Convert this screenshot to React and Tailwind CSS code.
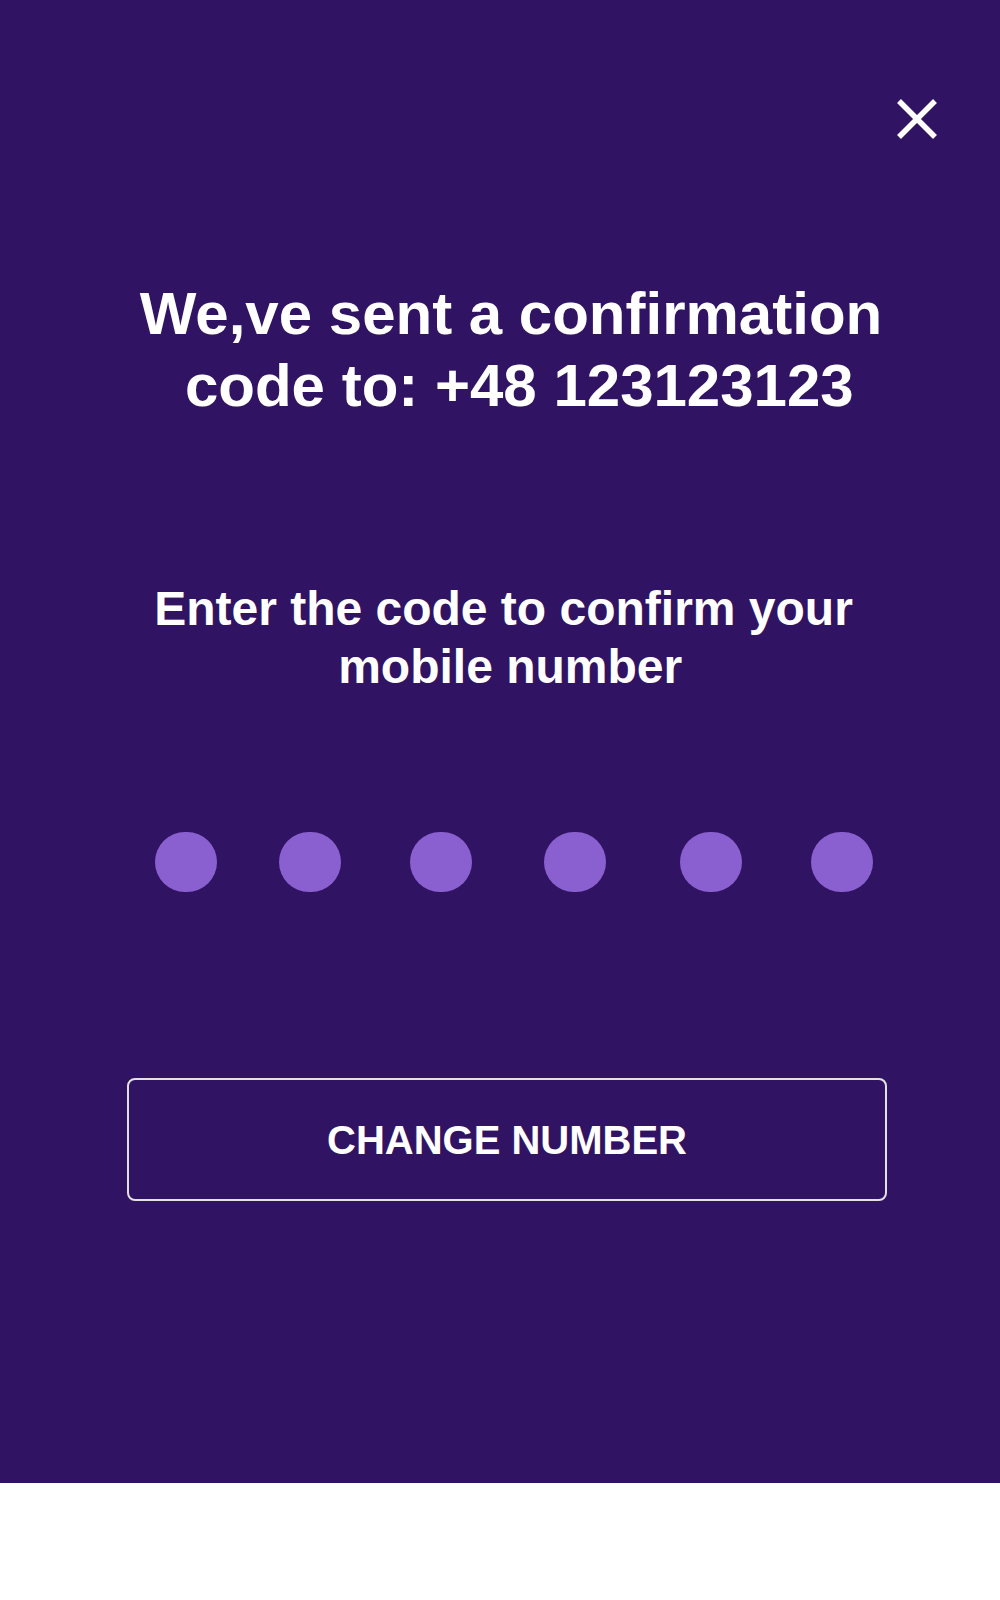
const dots = ["", "ml-[62px]", "ml-[69px]", "ml-[72px]", "ml-[74px]", "ml-[69px]"];

function CloseIcon() {
  return (
    <svg width="42" height="42" viewBox="0 0 42 42" fill="none">
      <path d="M3 3 L39 39 M39 3 L3 39" stroke="#ffffff" strokeWidth="5.5" />
    </svg>
  );
}

export default function App() {
  return (
    <div className="min-h-[1600px] bg-white font-['Liberation_Sans',Arial,sans-serif]">
      <div className="relative h-[1483px] bg-[#311363] text-white font-bold">
        {/* Close */}
        <button className="absolute left-[896px] top-[98px] p-0 border-0 bg-transparent cursor-pointer">
          <CloseIcon />
        </button>

        {/* Heading */}
        <h1 className="pt-[278px] pl-[22px] text-center text-[60px] leading-[72px]">
          <span className="block whitespace-pre">We,ve sent a confirmation</span>
          <span className="block whitespace-pre">{" code to: +48 123123123"}</span>
        </h1>

        <p className="mt-[158px] pl-[7px] text-center text-[48px] leading-[57.6px]">
          <span className="block whitespace-pre">Enter the code to confirm your</span>
          <span className="block whitespace-pre">{" mobile number"}</span>
        </p>

        {/* Code dots */}
        <div className="mt-[137px] ml-[155px] flex">
          {dots.map((m, i) => (
            <div key={i} className={`w-[62px] h-[60px] rounded-full bg-[#8a60d0] ${m}`} />
          ))}
        </div>

        <button className="mt-[186px] ml-[127px] w-[760px] h-[123px] flex items-center justify-center rounded-lg border-2 border-[#e2e2e2] bg-transparent text-white text-[40px] font-bold leading-none">
          CHANGE NUMBER
        </button>
      </div>
    </div>
  );
}
